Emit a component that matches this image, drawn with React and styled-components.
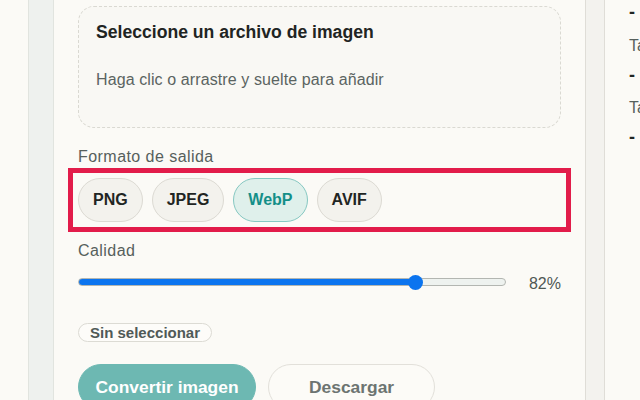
import React, { useState } from 'react';
import styled, { createGlobalStyle } from 'styled-components';

const GlobalStyle = createGlobalStyle`
  html, body {
    margin: 0;
    padding: 0;
    background: #fbfaf6;
    font-family: "Liberation Sans", Arial, sans-serif;
  }
  * { box-sizing: border-box; }
`;

const Page = styled.div`
  display: flex;
  height: 400px;
  width: 640px;
  overflow: hidden;
  background: #fbfaf6;
`;

const Gutter = styled.div`
  width: 28px;
  flex: none;
`;

const Rail = styled.div`
  width: 26px;
  flex: none;
  background: #eef1ee;
  border-left: 1px solid #e1e4df;
  border-right: 1px solid #e1e4df;
`;

const Main = styled.main`
  width: 531px;
  flex: none;
  padding: 6px 24px 0;
  display: flex;
  flex-direction: column;
`;

const Divider = styled.div`
  width: 20px;
  flex: none;
  background: #f3f2ee;
  border-left: 1px solid #dfddd7;
  border-right: 1px solid #dfddd7;
`;

const Aside = styled.aside`
  flex: 1;
  min-width: 0;
  padding-left: 24px;
  white-space: nowrap;
  overflow: hidden;
`;

const DropZone = styled.div`
  border: 1px dashed #dad9d2;
  border-radius: 16px;
  background: #f9f8f4;
  padding: 13px 17px 36px;
  cursor: pointer;
`;

const DropTitle = styled.div`
  font-size: 17.6px;
  line-height: 24px;
  font-weight: 700;
  color: #1f2523;
`;

const DropHint = styled.div`
  margin-top: 25px;
  font-size: 16px;
  line-height: 22px;
  letter-spacing: 0.1px;
  color: #5b6461;
`;

const Label = styled.div`
  margin-top: 19px;
  font-size: 16px;
  line-height: 20px;
  letter-spacing: 0.45px;
  color: #56605c;
`;

const FormatRow = styled.div`
  margin-top: 11px;
  display: flex;
  gap: 9px;
  outline: 5px solid #e21c4a;
  outline-offset: 5px;
`;

const FormatButton = styled.button`
  height: 44px;
  padding: 0 14px;
  border-radius: 22px;
  border: 1px solid ${p => (p.$active ? '#86c8c2' : '#dcdad3')};
  background: ${p => (p.$active ? '#dff0eb' : '#f3f2ed')};
  color: ${p => (p.$active ? '#138f88' : '#1f2523')};
  font-family: inherit;
  font-size: 16px;
  font-weight: 700;
  cursor: pointer;
`;

const SliderRow = styled.div`
  margin-top: 9px;
  height: 24px;
  display: flex;
  align-items: center;
  gap: 23px;
`;

const Range = styled.input`
  -webkit-appearance: none;
  appearance: none;
  flex: 1;
  margin: 0;
  height: 8px;
  border: 1px solid #b3b6b1;
  border-radius: 4px;
  cursor: pointer;

  &::-webkit-slider-runnable-track {
    height: 6px;
    background: transparent;
  }

  &::-webkit-slider-thumb {
    -webkit-appearance: none;
    width: 15px;
    height: 15px;
    margin-top: -4.5px;
    border-radius: 50%;
    background: #0b74ef;
    border: none;
  }
`;

const RangeValue = styled.span`
  padding-top: 4px;
  font-size: 16px;
  line-height: 20px;
  color: #4f5754;
`;

const Chip = styled.span`
  align-self: flex-start;
  margin-top: 29px;
  height: 24px;
  padding: 0 11px;
  display: inline-flex;
  align-items: center;
  border: 1px solid #dcdbd4;
  border-radius: 12px;
  background: #fdfcf9;
  font-size: 15px;
  font-weight: 700;
  color: #505a57;
`;

const Actions = styled.div`
  margin-top: 22px;
  display: flex;
  gap: 12px;
`;

const ActionButton = styled.button`
  height: 46px;
  padding: 0 ${p => (p.$primary ? '16.5px' : '40px')};
  border-radius: 23px;
  border: 1px solid ${p => (p.$primary ? '#6db8b2' : '#e2e0da')};
  background: ${p => (p.$primary ? '#6db8b2' : '#fcfbf7')};
  color: ${p => (p.$primary ? '#ffffff' : '#6c7471')};
  font-family: inherit;
  font-size: 17.4px;
  font-weight: 700;
  cursor: pointer;
`;

const StatLabel = styled.div`
  margin-top: 11.5px;
  font-size: 16px;
  line-height: 20px;
  color: #56605c;
`;

const StatValue = styled.div`
  margin-top: ${p => (p.$top ? '0' : '7px')};
  font-size: 18px;
  line-height: 24px;
  font-weight: 700;
  color: #1f2523;
`;

const formats = ['PNG', 'JPEG', 'WebP', 'AVIF'];

export default function App() {
  const [format, setFormat] = useState('WebP');
  const [quality, setQuality] = useState(82);
  const min = 10;
  const max = 100;
  const ratio = (quality - min) / (max - min);
  const fill = `calc(7.5px + (100% - 15px) * ${ratio})`;

  return (
    <>
      <GlobalStyle />
      <Page>
        <Gutter />
        <Rail />
        <Main>
          <DropZone>
            <DropTitle>Seleccione un archivo de imagen</DropTitle>
            <DropHint>Haga clic o arrastre y suelte para añadir</DropHint>
          </DropZone>

          <Label>Formato de salida</Label>
          <FormatRow>
            {formats.map(f => (
              <FormatButton key={f} $active={f === format} onClick={() => setFormat(f)}>
                {f}
              </FormatButton>
            ))}
          </FormatRow>

          <Label>Calidad</Label>
          <SliderRow>
            <Range
              type="range"
              min={min}
              max={max}
              value={quality}
              onChange={e => setQuality(Number(e.target.value))}
              style={{
                background: `linear-gradient(to right, #0b74ef ${fill}, #eef2ef ${fill})`,
              }}
            />
            <RangeValue>{quality}%</RangeValue>
          </SliderRow>

          <Chip>Sin seleccionar</Chip>

          <Actions>
            <ActionButton $primary>Convertir imagen</ActionButton>
            <ActionButton>Descargar</ActionButton>
          </Actions>
        </Main>
        <Divider />
        <Aside>
          <StatValue $top>-</StatValue>
          <StatLabel>Tamaño original</StatLabel>
          <StatValue>-</StatValue>
          <StatLabel>Tamaño convertido</StatLabel>
          <StatValue>-</StatValue>
        </Aside>
      </Page>
    </>
  );
}
